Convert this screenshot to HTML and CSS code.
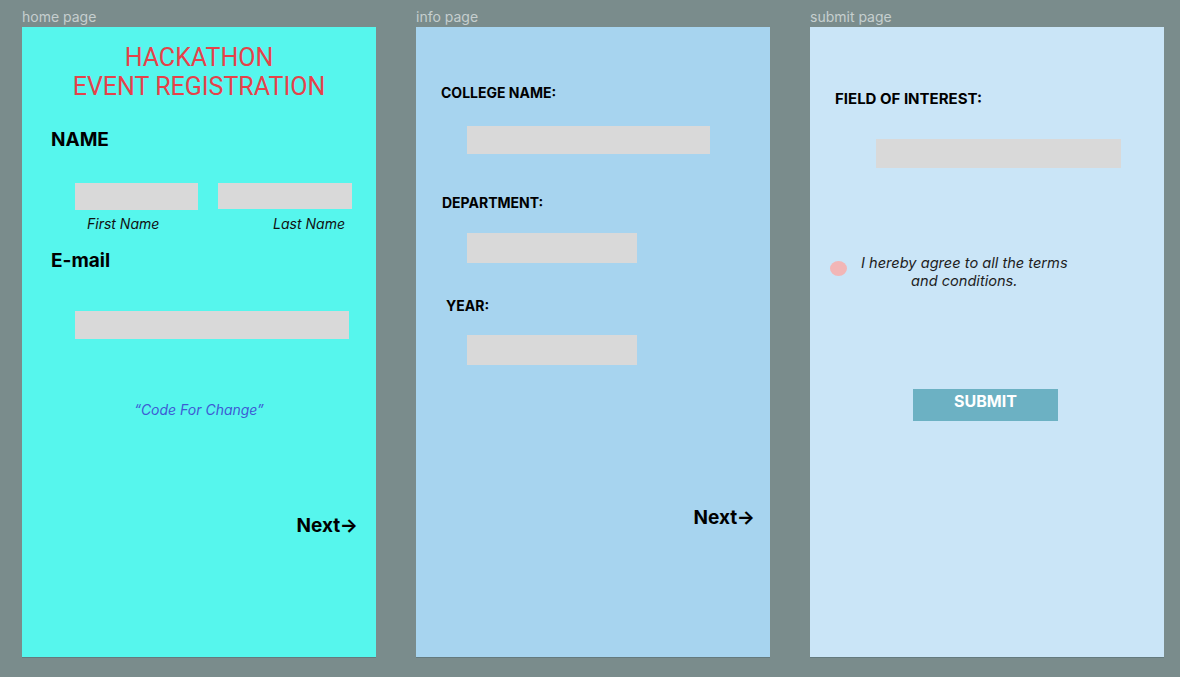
FILE: index.html
```html
<!DOCTYPE html>
<html lang="en">
<head>
<meta charset="utf-8">
<title>Hackathon Event Registration</title>
<link rel="stylesheet" href="styles.css">
</head>
<body>
<div class="board">
  <section class="col">
    <div class="frame-label">home page</div>
    <div class="frame home">
      <h1 class="title">HACKATHON<br>EVENT REGISTRATION</h1>
      <div class="h-label name-label">NAME</div>
      <div class="name-row">
        <div class="field first"></div>
        <div class="field last"></div>
      </div>
      <div class="name-captions">
        <span>First Name</span>
        <span>Last Name</span>
      </div>
      <div class="h-label email-label">E-mail</div>
      <div class="field email"></div>
      <div class="quote">“Code For Change”</div>
      <div class="next home-next">Next→</div>
    </div>
  </section>

  <section class="col">
    <div class="frame-label">info page</div>
    <div class="frame info">
      <div class="s-label college-label">COLLEGE NAME:</div>
      <div class="field college"></div>
      <div class="s-label dept-label">DEPARTMENT:</div>
      <div class="field dept"></div>
      <div class="s-label year-label">YEAR:</div>
      <div class="field year"></div>
      <div class="next info-next">Next→</div>
    </div>
  </section>

  <section class="col">
    <div class="frame-label">submit page</div>
    <div class="frame submit">
      <div class="s-label interest-label">FIELD OF INTEREST:</div>
      <div class="field interest"></div>
      <div class="agree">
        <span class="radio"></span>
        <span class="agree-text">I hereby agree to all the terms<br>and conditions.</span>
      </div>
      <div class="submit-btn">SUBMIT</div>
    </div>
  </section>
</div>
</body>
</html>
```

FILE: styles.css
```css
* { box-sizing: border-box; }

html, body {
  margin: 0;
  padding: 0;
}

body {
  width: 1180px;
  height: 677px;
  background: #7a8c8c;
  font-family: Inter, "Noto Sans", sans-serif;
  overflow: hidden;
}

.board {
  display: flex;
  gap: 40px;
  padding-left: 22px;
}

.col {
  width: 354px;
  flex: none;
}

.frame-label {
  height: 27px;
  padding-top: 8px;
  font-size: 14px;
  line-height: 17px;
  color: #c6cfcf;
}

.frame {
  height: 630px;
  display: flex;
  flex-direction: column;
  align-items: flex-start;
  box-shadow: 0 1px 0 rgba(60, 90, 100, 0.35);
}

.home { background: #56f6ed; }
.info { background: #a7d4ef; }
.submit { background: #cae5f7; }

.field {
  background: #d9d9d9;
  flex: none;
}

/* ---------- home page ---------- */
.title {
  align-self: stretch;
  margin: 16px 0 0;
  font-family: Roboto, "Liberation Sans", sans-serif;
  font-weight: 400;
  font-size: 25px;
  line-height: 29px;
  text-align: center;
  color: #e5424a;
}

.h-label {
  font-weight: 700;
  font-size: 19px;
  line-height: 23px;
  color: #000;
  margin-left: 29px;
}

.name-label { margin-top: 27px; }

.name-row {
  display: flex;
  gap: 20px;
  margin-top: 32px;
  margin-left: 53px;
}

.first { width: 123px; height: 27px; }
.last { width: 134px; height: 26px; }

.name-captions {
  display: flex;
  justify-content: space-between;
  width: 258px;
  margin-top: 5px;
  margin-left: 65px;
  font-style: italic;
  font-size: 14px;
  line-height: 17px;
  color: #111;
}

.email-label { margin-top: 17px; }

.email {
  width: 274px;
  height: 28px;
  margin-top: 39px;
  margin-left: 53px;
}

.quote {
  align-self: stretch;
  margin-top: 62px;
  text-align: center;
  font-style: italic;
  font-size: 14px;
  line-height: 17px;
  color: #3e5bd4;
}

.next {
  align-self: flex-end;
  font-weight: 700;
  font-size: 19px;
  line-height: 23px;
  color: #000;
}

.home-next {
  margin-top: 96px;
  margin-right: 18px;
}

/* ---------- info page ---------- */
.s-label {
  font-weight: 700;
  font-size: 14px;
  line-height: 17px;
  color: #000;
}

.college-label { margin-top: 57px; margin-left: 25px; }
.college { width: 243px; height: 28px; margin-top: 25px; margin-left: 51px; }

.dept-label { margin-top: 40px; margin-left: 26px; }
.dept { width: 170px; height: 30px; margin-top: 22px; margin-left: 51px; }

.year-label { margin-top: 34px; margin-left: 30px; }
.year { width: 170px; height: 30px; margin-top: 21px; margin-left: 51px; }

.info-next {
  margin-top: 141px;
  margin-right: 15px;
}

/* ---------- submit page ---------- */
.interest-label {
  margin-top: 63px;
  margin-left: 25px;
  font-size: 15px;
  line-height: 18px;
}

.interest {
  width: 245px;
  height: 29px;
  margin-top: 31px;
  margin-left: 66px;
}

.agree {
  display: flex;
  align-items: flex-start;
  gap: 14px;
  margin-top: 86px;
  margin-left: 20px;
}

.radio {
  display: block;
  width: 17px;
  height: 15px;
  margin-top: 7px;
  border-radius: 50%;
  background: #f2b6b6;
  flex: none;
}

.agree-text {
  text-align: center;
  font-style: italic;
  font-size: 14.6px;
  line-height: 18px;
  color: #1e1e1e;
}

.submit-btn {
  width: 145px;
  height: 32px;
  margin-top: 99px;
  margin-left: 103px;
  padding-top: 3px;
  background: #6cb1c3;
  color: #fff;
  text-align: center;
  font-weight: 700;
  font-size: 16px;
  line-height: 19px;
}
```
